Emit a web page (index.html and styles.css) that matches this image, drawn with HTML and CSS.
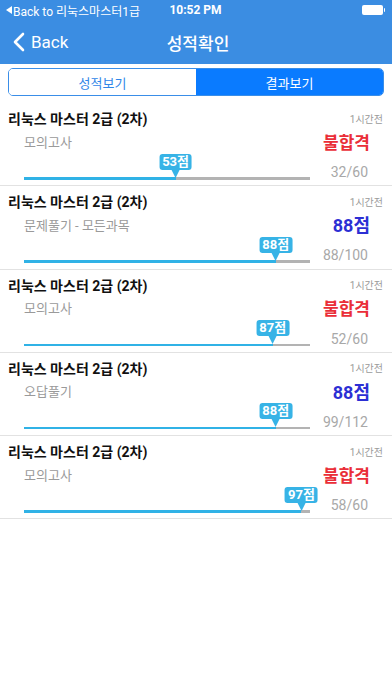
FILE: index.html
```html
<!DOCTYPE html>
<html lang="ko">
<head>
<meta charset="utf-8">
<link rel="stylesheet" href="styles.css">
</head>
<body>
<header class="header">
  <div class="statusbar">
    <div class="sb-left"><span class="sb-tri"></span>Back to 리눅스마스터1급</div>
    <div class="sb-time">10:52 PM</div>
    <div class="sb-right"><span class="battery"></span><span class="battery-tip"></span></div>
  </div>
  <div class="navbar">
    <div class="nav-back">
      <svg class="chev" width="13" height="20" viewBox="0 0 13 20"><path d="M11 2 L3 10 L11 18" fill="none" stroke="#fff" stroke-width="2.6" stroke-linecap="round" stroke-linejoin="round"/></svg>
      <span>Back</span>
    </div>
    <div class="nav-title">성적확인</div>
    <div class="nav-spacer"></div>
  </div>
</header>

<div class="segmented">
  <div class="seg seg-off">성적보기</div>
  <div class="seg seg-on">결과보기</div>
</div>

<ul class="list">
  <li class="row">
    <div class="line1"><span class="title">리눅스 마스터 2급 (2차)</span><span class="time">1시간전</span></div>
    <div class="line2"><span class="sub">모의고사</span><span class="result fail">불합격</span></div>
    <div class="line3">
      <div class="track"><div class="fill" style="width:53%"></div><div class="bubble" style="left:53%">53점</div></div>
      <span class="count">32/60</span>
    </div>
  </li>
  <li class="row">
    <div class="line1"><span class="title">리눅스 마스터 2급 (2차)</span><span class="time">1시간전</span></div>
    <div class="line2"><span class="sub">문제풀기 - 모든과목</span><span class="result pass">88점</span></div>
    <div class="line3">
      <div class="track"><div class="fill" style="width:88%"></div><div class="bubble" style="left:88%">88점</div></div>
      <span class="count">88/100</span>
    </div>
  </li>
  <li class="row">
    <div class="line1"><span class="title">리눅스 마스터 2급 (2차)</span><span class="time">1시간전</span></div>
    <div class="line2"><span class="sub">모의고사</span><span class="result fail">불합격</span></div>
    <div class="line3">
      <div class="track"><div class="fill" style="width:87%"></div><div class="bubble" style="left:87%">87점</div></div>
      <span class="count">52/60</span>
    </div>
  </li>
  <li class="row">
    <div class="line1"><span class="title">리눅스 마스터 2급 (2차)</span><span class="time">1시간전</span></div>
    <div class="line2"><span class="sub">오답풀기</span><span class="result pass">88점</span></div>
    <div class="line3">
      <div class="track"><div class="fill" style="width:88%"></div><div class="bubble" style="left:88%">88점</div></div>
      <span class="count">99/112</span>
    </div>
  </li>
  <li class="row">
    <div class="line1"><span class="title">리눅스 마스터 2급 (2차)</span><span class="time">1시간전</span></div>
    <div class="line2"><span class="sub">모의고사</span><span class="result fail">불합격</span></div>
    <div class="line3">
      <div class="track"><div class="fill" style="width:97%"></div><div class="bubble" style="left:97%">97점</div></div>
      <span class="count">58/60</span>
    </div>
  </li>
</ul>
</body>
</html>
```
FILE: styles.css
```css
* { box-sizing: border-box; }
html, body { margin: 0; padding: 0; background: #fff; }
body {
  width: 392px;
  height: 696px;
  font-family: "Roboto", "Noto Sans CJK KR", sans-serif;
  color: #111;
  overflow: hidden;
}
.header { background: #3b8de2; color: #fff; }
.statusbar {
  height: 20px;
  display: flex;
  align-items: center;
  padding: 0 7px 0 6px;
  font-size: 12px;
}
.sb-left { flex: 1; display: flex; align-items: center; }
.sb-tri {
  width: 0; height: 0;
  border-top: 4px solid transparent;
  border-bottom: 4px solid transparent;
  border-right: 6px solid #fff;
  margin-right: 1px;
}
.sb-time { font-weight: 700; flex: 0 0 auto; }
.sb-right { flex: 1; display: flex; justify-content: flex-end; align-items: center; }
.battery { width: 21px; height: 10px; background: #fff; border-radius: 2px; }
.battery-tip { width: 1.5px; height: 4px; background: #fff; margin-left: 1px; border-radius: 0 1px 1px 0; }
.navbar {
  height: 44px;
  display: flex;
  align-items: center;
  padding: 0 8px 0 12px;
}
.nav-back { flex: 1; display: flex; align-items: center; font-size: 17px; }
.chev { margin-right: 6px; }
.nav-title { font-size: 17px; font-weight: 500; }
.nav-spacer { flex: 1; }

.segmented {
  margin: 4px 8px 0;
  height: 28px;
  display: flex;
  border: 1px solid #3a8ee8;
  border-radius: 5px;
  overflow: hidden;
  font-size: 13px;
}
.seg { flex: 1; display: flex; align-items: center; justify-content: center; }
.seg-off { background: #fff; color: #2f86e8; }
.seg-on { background: #0a7bff; color: #fff; }

.list { list-style: none; margin: 7px 0 0; padding: 0; }
.row {
  height: 83.3px;
  border-bottom: 1px solid #e2e2e2;
  padding: 6px 9px 0 8px;
}
.line1 {
  height: 18px;
  display: flex;
  align-items: center;
  justify-content: space-between;
}
.title { font-size: 14px; font-weight: 700; color: #111; }
.time { font-size: 10px; color: #9a9a9a; }
.line2 {
  margin-top: 2px;
  height: 24px;
  display: flex;
  align-items: center;
  justify-content: space-between;
  padding: 0 13px 0 16px;
}
.sub { font-size: 13px; color: #9a9a9a; }
.result { font-size: 17px; font-weight: 700; }
.fail { color: #ea2e38; }
.pass { color: #2c2fd4; font-size: 18px; }
.line3 {
  position: relative;
  height: 32px;
  display: flex;
  align-items: flex-start;
  padding: 0 15px 0 16px;
}
.track {
  position: relative;
  margin-top: 24px;
  width: 286px;
  height: 2.5px;
  background: #b3b3b3;
}
.fill { height: 100%; background: #30b2e6; }
.bubble {
  position: absolute;
  bottom: 10px;
  transform: translateX(-50%);
  height: 16px;
  padding: 0 3px;
  border-radius: 3px;
  background: #37b3e6;
  color: #fff;
  font-size: 13px;
  font-weight: 700;
  line-height: 16px;
  white-space: nowrap;
}
.bubble::after {
  content: "";
  position: absolute;
  left: 50%;
  top: 16px;
  margin-left: -4px;
  border-left: 4px solid transparent;
  border-right: 4px solid transparent;
  border-top: 8px solid #37b3e6;
}
.count {
  margin-left: auto;
  margin-top: 11px;
  font-size: 14px;
  color: #a8a8a8;
  line-height: 16px;
}
```
